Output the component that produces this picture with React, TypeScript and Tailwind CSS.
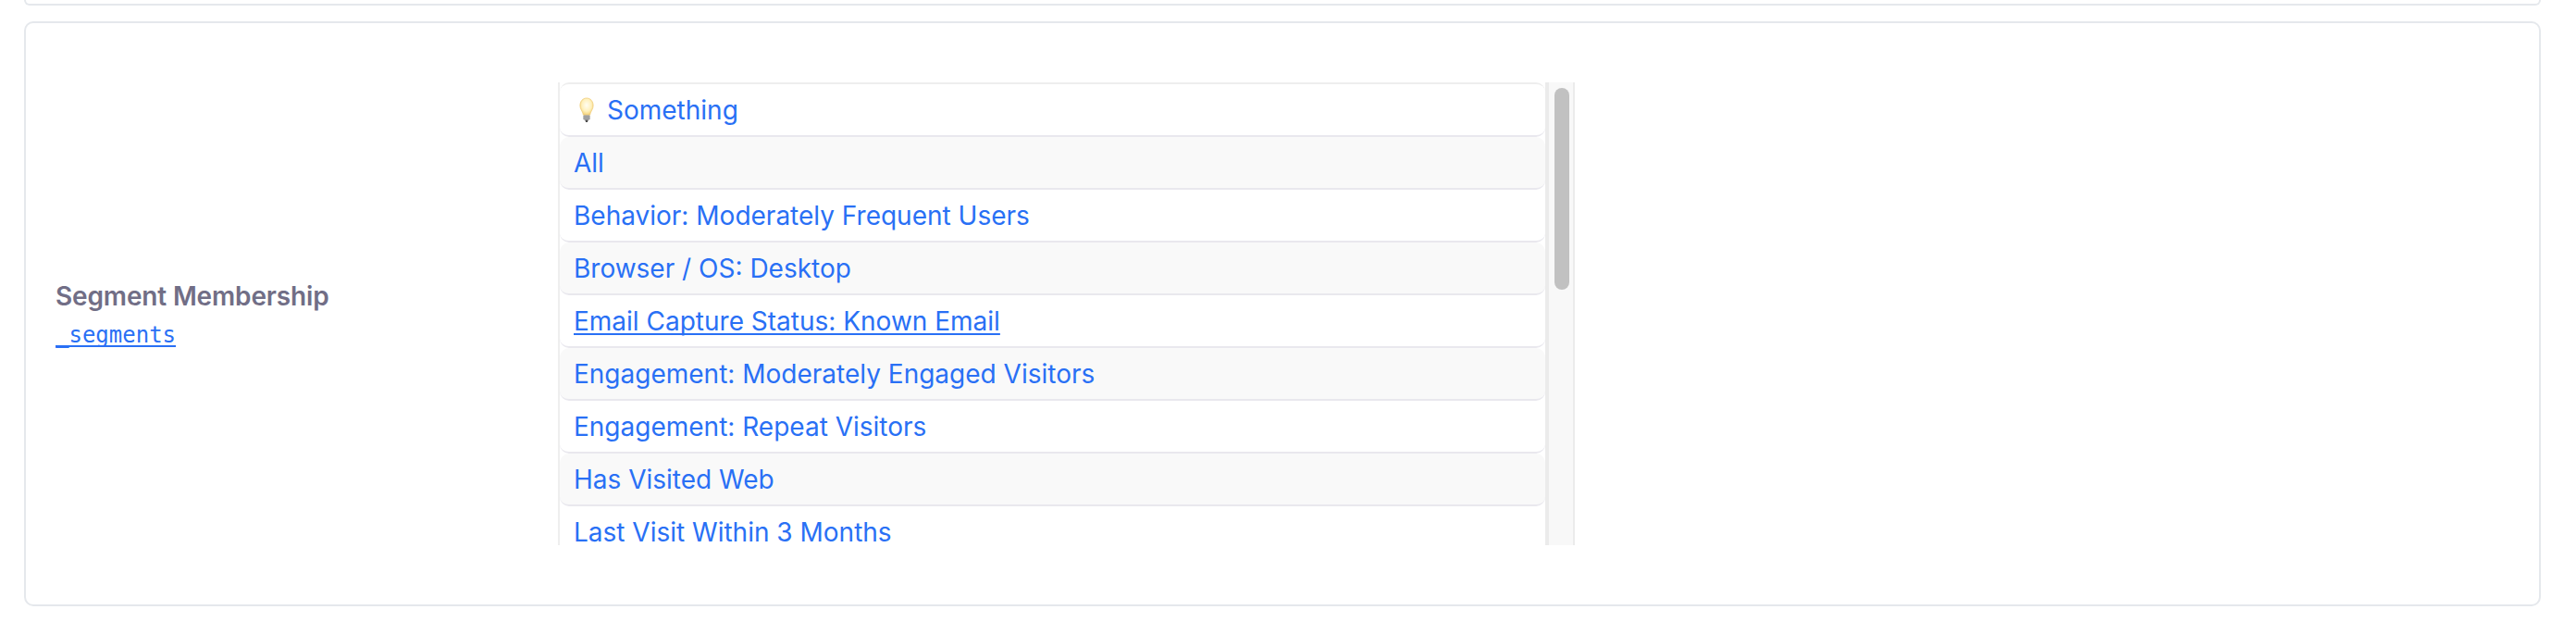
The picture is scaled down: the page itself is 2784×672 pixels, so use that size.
const rows = [
  "All",
  "Behavior: Moderately Frequent Users",
  "Browser / OS: Desktop",
  "Email Capture Status: Known Email",
  "Engagement: Moderately Engaged Visitors",
  "Engagement: Repeat Visitors",
  "Has Visited Web",
  "Last Visit Within 3 Months",
];

function Bulb() {
  return (
    <svg width="16" height="28" viewBox="0 0 18 28" preserveAspectRatio="none" className="ml-[6px] shrink-0" aria-hidden="true">
      <defs>
        <radialGradient id="glass" cx="50%" cy="42%" r="60%">
          <stop offset="0%" stopColor="#fffdf2" />
          <stop offset="60%" stopColor="#fff1bd" />
          <stop offset="100%" stopColor="#f3cf73" />
        </radialGradient>
      </defs>
      <path
        d="M9 1C4.2 1 1 4.6 1 9c0 3.4 2.2 5.4 3.3 8 .3.8.5 1.5.6 2.2h8.2c.1-.7.3-1.4.6-2.2 1.100-2.600 3.300-4.600 3.300-8 0-4.400-3.200-8-8-8z"
        fill="url(#glass)"
        stroke="#efcb76"
        strokeWidth="0.8"
      />
      <rect x="5" y="19.400" width="8" height="5" rx="1.200" fill="#8d8d8d" />
      <path d="M5 21h8M5 23h8" stroke="#c9c9c9" strokeWidth="0.7" />
      <path d="M7 24.400h4L10 27H8z" fill="#4a4a4a" />
    </svg>
  );
}

function Row({ label, shaded, top, underline, icon }: { label: string; shaded?: boolean; top?: boolean; underline?: boolean; icon?: boolean }) {
  return (
    <div
      className={`flex shrink-0 items-center gap-[14px] rounded-[10px] border-b-2 border-[#e9e8ee] pl-[15px] text-[28px] text-[#2970f5] ${shaded ? "bg-[#f9f9f9]" : "bg-white"} ${top ? "h-[59px] border-t-2 border-t-[#eeeeee]" : "h-[57px]"}`}
    >
      {icon && <Bulb />}
      <span className={underline ? "underline decoration-2 underline-offset-[3px] [text-decoration-skip-ink:none]" : ""}>{label}</span>
    </div>
  );
}

export default function App() {
  return (
    <div className="flex h-[672px] flex-col gap-[17px] overflow-hidden bg-white pl-[26px] pr-[38px] font-['Inter',sans-serif]">
      <div className="h-[6px] shrink-0 rounded-b-[10px] border-x-2 border-b-2 border-[#e5e8ec]" />
      <div className="flex h-[632px] shrink-0 items-center rounded-[10px] border-2 border-[#e5e8ec] bg-white pl-[32px]">
        <div className="w-[543px] shrink-0">
          <div className="text-[28px] font-semibold leading-[40px] tracking-[-0.15px] text-[#716e86]">Segment Membership</div>
          <div className="mt-[6px] font-['DejaVu_Sans_Mono',monospace] text-[24px] leading-[32px] text-[#2970f5] underline decoration-2 underline-offset-[3px] [text-decoration-skip-ink:none]">
            _segments
          </div>
        </div>
        <div className="flex h-[500px] w-[1099px] shrink-0 overflow-hidden">
          <div className="flex min-w-0 flex-1 flex-col border-l-2 border-[#eeeeee]">
            <Row label="Something" top icon />
            {rows.map((r, i) => (
              <Row key={r} label={r} shaded={i % 2 === 0} underline={i === 3} />
            ))}
          </div>
          <div className="w-[32px] shrink-0 border-l-[4px] border-r-2 border-[#ebebeb] bg-[#f8f8f8] pl-[6px] pt-[6px]">
            <div className="h-[218px] w-[16px] rounded-full bg-[#c1c1c1]" />
          </div>
        </div>
      </div>
      <div className="h-[20px] shrink-0 rounded-t-[10px] border-x-2 border-t-2 border-[#e5e8ec]" />
    </div>
  );
}
